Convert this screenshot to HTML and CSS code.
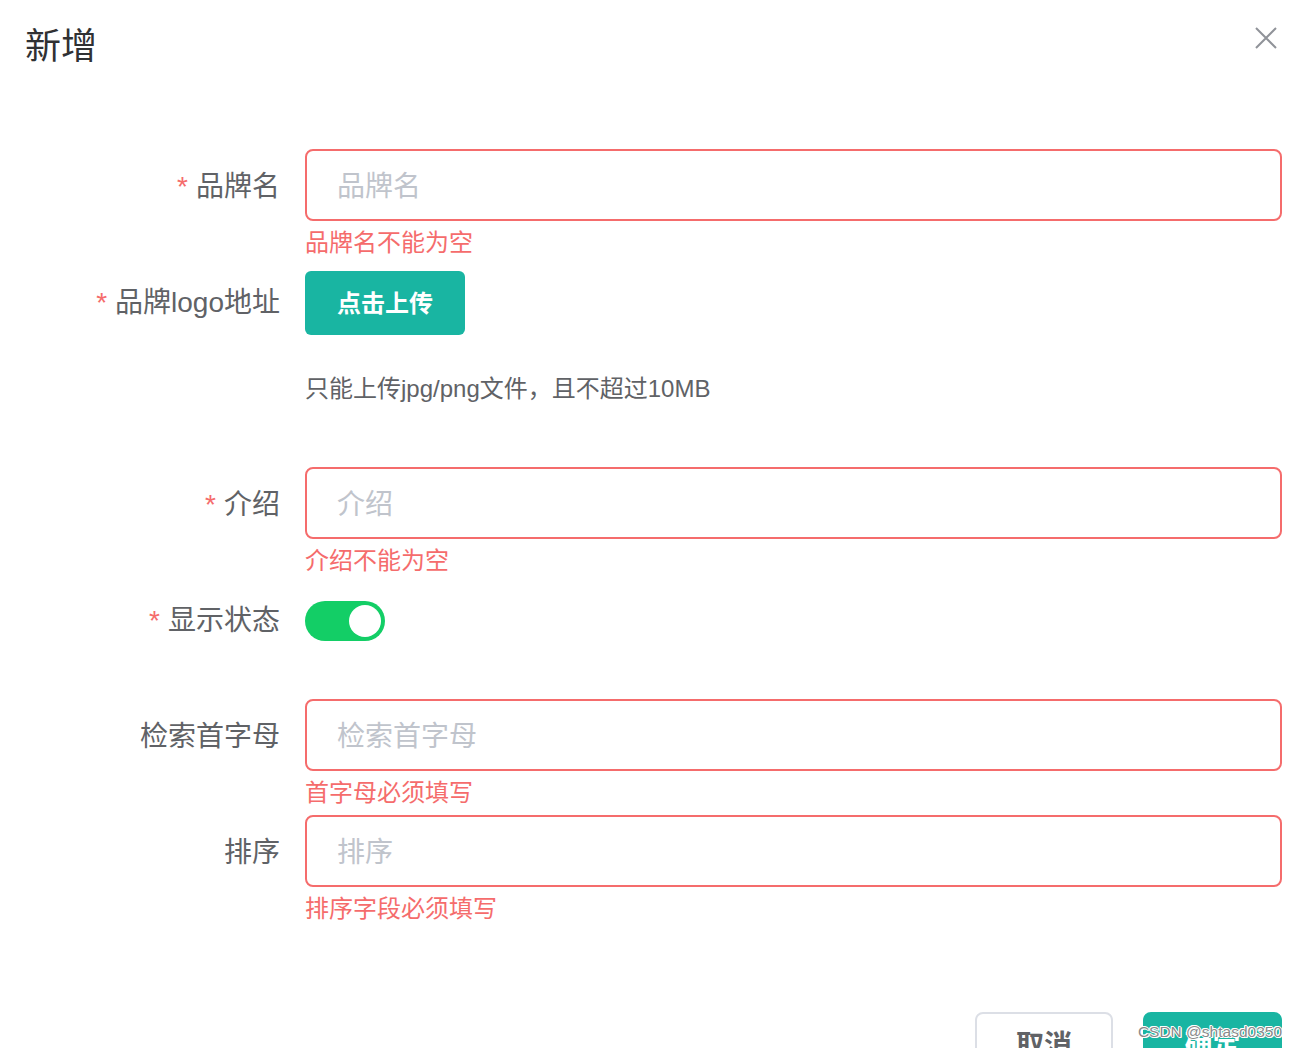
FILE: index.html
```html
<!DOCTYPE html>
<html lang="zh-CN">
<head>
<meta charset="utf-8">
<title>新增</title>
<link rel="stylesheet" href="styles.css">
</head>
<body>
<div class="dialog">
  <div class="dialog-header">
    <span class="dialog-title">新增</span>
    <svg class="close-icon" width="22" height="22" viewBox="0 0 22 22"><path d="M1 1 L21 21 M21 1 L1 21" stroke="#909399" stroke-width="2" fill="none"/></svg>
  </div>
  <form class="form">
    <div class="form-item with-error">
      <label class="form-label required">品牌名</label>
      <div class="form-content">
        <input class="text-input" placeholder="品牌名">
        <div class="error">品牌名不能为空</div>
      </div>
    </div>
    <div class="form-item">
      <label class="form-label required">品牌logo地址</label>
      <div class="form-content">
        <div class="upload-row"><button type="button" class="btn-upload">点击上传</button></div>
        <div class="upload-tip">只能上传jpg/png文件，且不超过10MB</div>
      </div>
    </div>
    <div class="form-item with-error">
      <label class="form-label required">介绍</label>
      <div class="form-content">
        <input class="text-input" placeholder="介绍">
        <div class="error">介绍不能为空</div>
      </div>
    </div>
    <div class="form-item">
      <label class="form-label required">显示状态</label>
      <div class="form-content switch-row">
        <span class="switch"><span class="switch-knob"></span></span>
      </div>
    </div>
    <div class="form-item with-error">
      <label class="form-label">检索首字母</label>
      <div class="form-content">
        <input class="text-input" placeholder="检索首字母">
        <div class="error">首字母必须填写</div>
      </div>
    </div>
    <div class="form-item with-error">
      <label class="form-label">排序</label>
      <div class="form-content">
        <input class="text-input" placeholder="排序">
        <div class="error">排序字段必须填写</div>
      </div>
    </div>
  </form>
  <div class="dialog-footer">
    <button type="button" class="btn btn-cancel">取消</button>
    <button type="button" class="btn btn-primary">确定</button>
    <span class="watermark">CSDN @shtasd0350</span>
  </div>
</div>
</body>
</html>
```

FILE: styles.css
```css
html, body {
  margin: 0;
  padding: 0;
  background: #ffffff;
  overflow: hidden;
}
body {
  font-family: "Liberation Sans", "Noto Sans CJK SC", sans-serif;
  color: #606266;
}
.dialog {
  width: 1298px;
  height: 1048px;
  position: relative;
  overflow: hidden;
}
.dialog-header {
  display: flex;
  justify-content: space-between;
  align-items: flex-start;
  padding: 29px 21px 0 25px;
  height: 36px;
}
.dialog-title {
  font-size: 36px;
  line-height: 36px;
  color: #303133;
}
.close-icon {
  margin-top: -2px;
  display: block;
}
.form {
  padding-top: 84px;
  padding-right: 16px;
}
.form-item {
  display: flex;
  margin-bottom: 44px;
}
.form-item.with-error {
  margin-bottom: 10px;
}
.form-label {
  width: 305px;
  height: 72px;
  flex: none;
  box-sizing: border-box;
  padding-right: 25px;
  text-align: right;
  font-size: 28px;
  line-height: 76px;
  color: #606266;
  white-space: nowrap;
}
.form-label.required::before {
  content: "*";
  color: #f56c6c;
  margin-right: 8px;
}
.form-content {
  flex: 1;
  min-width: 0;
}
.text-input {
  display: block;
  width: 100%;
  height: 72px;
  box-sizing: border-box;
  border: 2px solid #f56c6c;
  border-radius: 8px;
  padding: 4px 30px 0;
  font-family: inherit;
  font-size: 28px;
  color: #606266;
  outline: none;
  background: #fff;
}
.text-input::placeholder {
  color: #c0c4cc;
}
.error {
  margin-top: 10px;
  font-size: 24px;
  line-height: 24px;
  color: #f56c6c;
}
.upload-row {
  height: 72px;
  display: flex;
  align-items: center;
}
.btn-upload {
  width: 160px;
  height: 64px;
  border: none;
  border-radius: 6px;
  background: #19b5a2;
  color: #fff;
  font-family: inherit;
  font-size: 24px;
  font-weight: bold;
  padding: 0 0 4px;
  margin-top: 4px;
}
.upload-tip {
  margin-top: 34px;
  margin-bottom: 16px;
  font-size: 24px;
  line-height: 36px;
  color: #606266;
}
.switch-row {
  height: 72px;
  display: flex;
  align-items: center;
  padding-top: 4px;
  box-sizing: border-box;
}
.switch {
  width: 80px;
  height: 40px;
  border-radius: 20px;
  background: #13ce66;
  display: flex;
  align-items: center;
  justify-content: flex-end;
  padding: 0 4px;
  box-sizing: border-box;
}
.switch-knob {
  width: 32px;
  height: 32px;
  border-radius: 50%;
  background: #fff;
}
.dialog-footer {
  display: flex;
  justify-content: flex-end;
  gap: 30px;
  margin-top: 91px;
  padding-right: 16px;
  position: relative;
}
.btn {
  height: 80px;
  box-sizing: border-box;
  border-radius: 8px;
  font-family: inherit;
  font-size: 28px;
  line-height: 28px;
  padding: 18px 0 0;
  display: flex;
  justify-content: center;
  align-items: flex-start;
  white-space: nowrap;
}
.btn-cancel {
  width: 138px;
  border: 2px solid #dcdfe6;
  background: #fff;
  color: #606266;
  font-weight: bold;
}
.btn-primary {
  width: 139px;
  border: 2px solid #19b5a2;
  background: #19b5a2;
  color: #fff;
  font-weight: bold;
}
.watermark {
  position: absolute;
  right: 16px;
  top: 11px;
  font-size: 15.5px;
  line-height: 18px;
  color: #8a8a8a;
  text-shadow: -1px 0 #fff, 1px 0 #fff, 0 -1px #fff, 0 1px #fff, 1px 1px #fff, -1px -1px #fff;
  white-space: nowrap;
  z-index: 1;
}
```
